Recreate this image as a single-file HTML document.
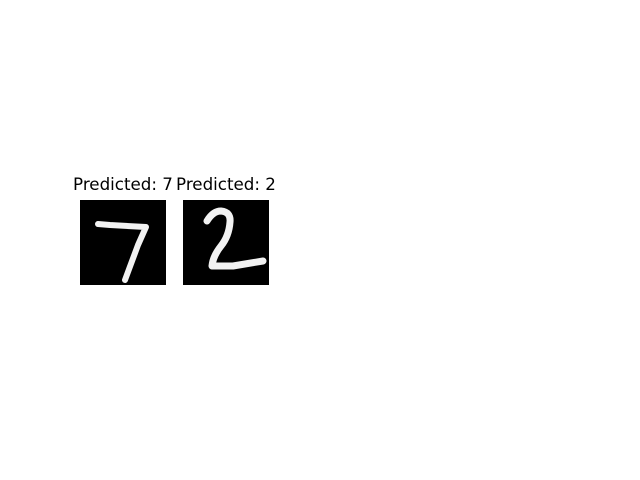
<!DOCTYPE html>
<html><head><style>
body{margin:0;width:640px;height:480px;background:#fff;position:relative;overflow:hidden;font-family:"DejaVu Sans","Liberation Sans",sans-serif;}
.t{position:absolute;top:174px;font-size:16.7px;color:#000;width:120px;text-align:center;white-space:nowrap}
svg{position:absolute;top:200px}
</style></head><body>
<div class="t" style="left:63px">Predicted: 7</div>
<div class="t" style="left:166px">Predicted: 2</div>
<svg style="left:80px" width="86" height="85" viewBox="0 0 86 85">
<rect width="86" height="85" fill="#000"/>
<path d="M18 24 L30 25 L66 27 L58 45 L45 80" fill="none" stroke="#fff" stroke-width="6" stroke-linejoin="round" stroke-linecap="round" opacity="0.95"/>
</svg>
<svg style="left:183px" width="86" height="85" viewBox="0 0 86 85">
<rect width="86" height="85" fill="#000"/>
<path d="M24 21 Q30 11 38 11 Q48 12 47 22 Q46 36 38 46 Q30 56 29 66 L50 66 L80 61" fill="none" stroke="#fff" stroke-width="7" stroke-linejoin="round" stroke-linecap="round" opacity="0.95"/>
</svg>
</body></html>
